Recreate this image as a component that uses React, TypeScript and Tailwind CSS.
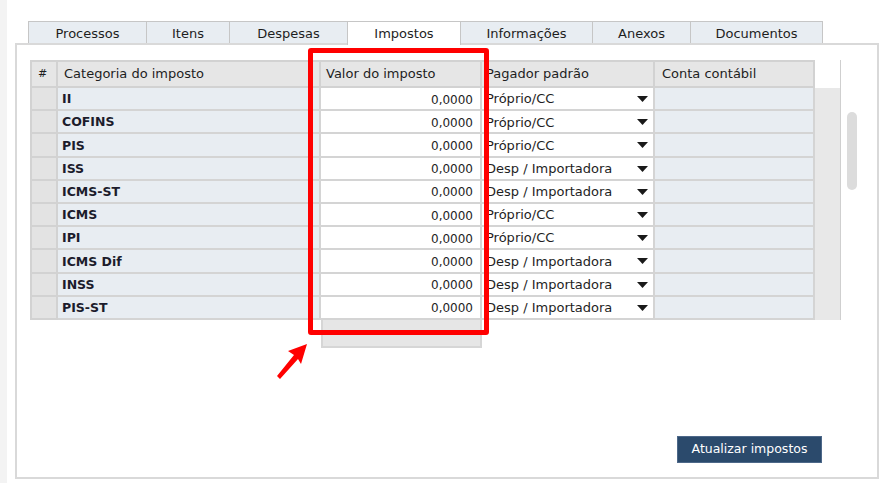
import React from "react";

const rows: [string, string][] = [
  ["II", "Próprio/CC"],
  ["COFINS", "Próprio/CC"],
  ["PIS", "Próprio/CC"],
  ["ISS", "Desp / Importadora"],
  ["ICMS-ST", "Desp / Importadora"],
  ["ICMS", "Próprio/CC"],
  ["IPI", "Próprio/CC"],
  ["ICMS Dif", "Desp / Importadora"],
  ["INSS", "Desp / Importadora"],
  ["PIS-ST", "Desp / Importadora"],
];

const tabs = [
  { label: "Processos", w: "w-[119px]" },
  { label: "Itens", w: "w-[84px]" },
  { label: "Despesas", w: "w-[119px]" },
  { label: "Impostos", w: "w-[114px]", active: true },
  { label: "Informações", w: "w-[133px]" },
  { label: "Anexos", w: "w-[99px]" },
  { label: "Documentos", w: "w-[133px]" },
];

function Caret() {
  return (
    <svg width="11" height="6" viewBox="0 0 11 6" className="shrink-0">
      <path d="M0 0 L11 0 L5.5 6 Z" fill="#1a1a1a" />
    </svg>
  );
}

export default function App() {
  return (
    <div className="relative w-[886px] h-[483px] bg-white flex overflow-hidden font-['DejaVu_Sans',sans-serif] text-[13px] text-[#1e1e1e]">
      <div className="w-[7px] h-full bg-[#f3f3f3]" />
      <div className="w-[8px]" />
      <div className="w-[864px] pt-[21px] flex flex-col">
        {/* Tabs */}
        <div className="relative z-10 flex h-[22px] items-start ml-[13px]">
          {tabs.map((t, i) => (
            <div
              key={t.label}
              className={`${t.w} ${i > 0 ? "-ml-px" : ""} ${
                t.active ? "h-[24px] bg-white relative z-10 pb-[2px]" : "h-[22px] bg-[#e8edf2]"
              } border-t border-l border-r border-[#c6c6c6] flex items-center justify-center leading-none pt-[1px]`}
            >
              {t.label}
            </div>
          ))}
        </div>
        {/* Panel */}
        <div className="h-[436px] border-2 border-[#d9d9d9] pl-[13px] pt-[15px] flex flex-col">
          <div className="flex">
            {/* Table */}
            <div className="flex flex-col w-[810px]">
              <div className="grid grid-cols-[28px_263px_161px_173px_160px_25px] h-[28px]">
                <div className="bg-[#e6e6e6] border-2 border-r-2 border-[#d2d2d2] flex items-center pl-[6px] text-[11px]">#</div>
                <div className="bg-[#e6e6e6] border-y-2 border-r-2 border-[#d2d2d2] flex items-center pl-[6px]">Categoria do imposto</div>
                <div className="bg-[#e6e6e6] border-y-2 border-r-2 border-[#d2d2d2] flex items-center pl-[5px]">Valor do imposto</div>
                <div className="bg-[#e6e6e6] border-y-2 border-r-2 border-[#d2d2d2] flex items-center pl-[4px]">Pagador padrão</div>
                <div className="bg-[#e6e6e6] border-y-2 border-r-2 border-[#d2d2d2] flex items-center pl-[7px]">Conta contábil</div>
                <div className="bg-white" />
              </div>
              {rows.map(([cat, pag]) => (
                <div key={cat} className="grid grid-cols-[28px_263px_161px_173px_160px_25px] h-[23.2px]">
                  <div className="bg-[#e3e3e3] border-l-2 border-r-2 border-b-2 border-[#d2d2d2]" />
                  <div className="bg-[#e8edf2] border-r-2 border-b-2 border-[#d4d4d4] flex items-center pl-[4px] pt-[2px] font-bold text-[12.5px] text-[#1c1c2c]">
                    {cat}
                  </div>
                  <div className="bg-white border-r-2 border-b-2 border-[#d4d4d4] flex items-center justify-end pr-[7px] pt-[2px] text-[12px]">
                    0,0000
                  </div>
                  <div className="bg-white border-r-2 border-b-2 border-[#d4d4d4] flex items-center justify-between pl-[4px] pr-[5px] pt-[1px]">
                    <span>{pag}</span>
                    <Caret />
                  </div>
                  <div className="bg-[#e8edf2] border-r-2 border-b-2 border-[#d4d4d4]" />
                  <div className="bg-[#e8e8e8]" />
                </div>
              ))}
            </div>
            {/* Scrollbar */}
            <div className="w-[22px] h-[260px] border-l border-[#cfcfcf] pl-[6px] pt-[52px]">
              <div className="w-[10px] h-[78px] rounded-full bg-[#dcdcdc]" />
            </div>
          </div>
          <div className="ml-[291px] w-[161px] h-[28px] bg-[#e6e6e6] border-x-2 border-b-2 border-[#d6d6d6]" />
          <div className="flex-1" />
          <div className="flex justify-end pr-[55px] pb-[14px]">
            <div className="w-[145px] h-[27px] bg-[#2b4a6c] border border-[#4d6889] text-white text-[12.5px] flex items-center justify-center">
              Atualizar impostos
            </div>
          </div>
        </div>
      </div>

      {/* Annotation: red highlight box */}
      <div className="absolute left-[308px] top-[48px] w-[181px] h-[287px] border-[5px] border-[#ff0000] rounded-[3px] pointer-events-none" />
      {/* Annotation: arrow */}
      <svg className="absolute left-[270px] top-[338px]" width="42" height="44" viewBox="0 0 42 44">
        <path d="M37 6 L18 13 L24 17 L7 38 L10 41 L28 21 L31 26 Z" fill="#ff0000" />
      </svg>
    </div>
  );
}
